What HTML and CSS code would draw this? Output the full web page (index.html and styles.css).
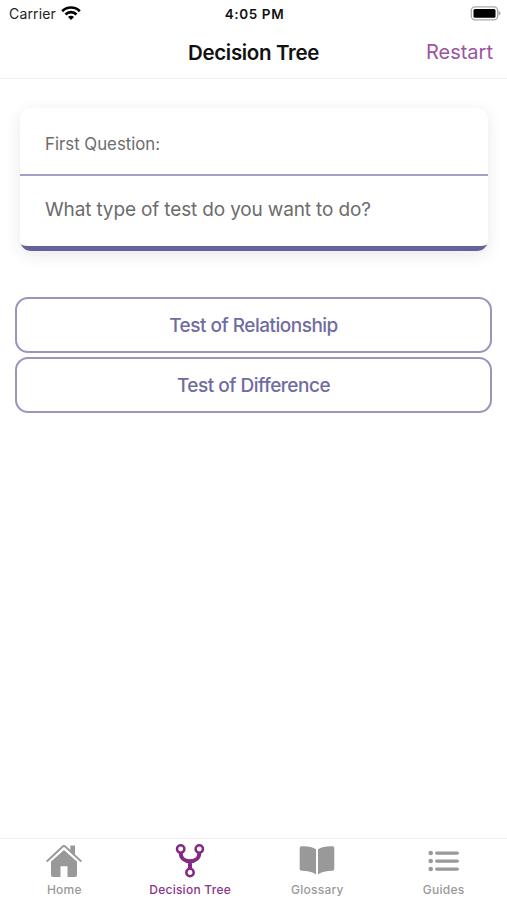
FILE: index.html
```
<!DOCTYPE html>
<html lang="en">
<head>
<meta charset="utf-8">
<title>Decision Tree</title>
<link rel="stylesheet" href="styles.css">
</head>
<body>
<div class="app">
  <div class="status">
    <div class="carrier"><span>Carrier</span>
      <svg class="wifi" width="20" height="14" viewBox="0 0 20 14" fill="none" stroke="#000" stroke-width="2.7"><path d="M1.2 5.2a12.3 12.3 0 0 1 17.6 0M4.5 8.5a7.7 7.7 0 0 1 11 0"/><path d="M10 14 7 11a4.2 4.2 0 0 1 6 0z" fill="#000" stroke="none"/></svg>
    </div>
    <span class="time">4:05 PM</span>
    <svg class="battery" width="31" height="15" viewBox="0 0 31 15"><rect x="1.3" y=".8" width="26.4" height="13" rx="3.8" fill="#fff" stroke="#aaa" stroke-width="1.3"/><rect x="3.500" y="3" width="22" height="8.7" rx="1.5"/><path d="M28.500 5v4.6q2-.6 2-2.3t-2-2.3z" fill="#aaa"/></svg>
  </div>
  <header class="navbar">
    <h1>Decision Tree</h1>
    <a class="restart">Restart</a>
  </header>
  <main>
    <section class="card">
      <div class="card-head"><span>First Question:</span></div>
      <div class="card-body"><span>What type of test do you want to do?</span></div>
    </section>
    <div class="choices">
      <button class="choice relationship">Test of Relationship</button>
      <button class="choice difference">Test of Difference</button>
    </div>
  </main>
  <nav class="tabs">
    <a class="tab home">
      <svg width="36" height="34" viewBox="0 0 36 34" fill="#999"><path d="M18 6 5 17.4V31q0 2 2 2h7.5V22.2h7V33H29q2 0 2-2V17.400z"/><path d="M24.300 1.500H29V11l-4.700-4.200z"/><path d="M1.300 17 16.500 2.700q1.500-1.300 3 0L34.700 17" fill="none" stroke="#999" stroke-width="1.900" stroke-linecap="round"/><path d="M3 18 18 4.500 33 18" fill="none" stroke="#fff" stroke-width="1.100"/></svg>
      <span>Home</span>
    </a>
    <a class="tab tree active">
      <svg width="30" height="34" viewBox="0 0 30 34" fill="none" stroke="#852987"><g stroke-width="2.500"><circle cx="5.700" cy="5" r="3.700"/><circle cx="24.300" cy="5" r="3.700"/><circle cx="15" cy="28.500" r="3.700"/></g><path d="M5.700 9c0 5 4 8.200 9.300 8.200s9.300-3.200 9.300-8.200M15 17v8" stroke-width="4"/></svg>
      <span>Decision Tree</span>
    </a>
    <a class="tab glossary">
      <svg width="36" height="34" viewBox="0 0 36 34" fill="#999"><path d="M17 5.200v25.300q-5-3.600-14.500-3.700Q.7 26.800.7 25V4.200Q.7 2.300 2.500 2.200 12 1.800 17 5.200zM19 5.200v25.300q5-3.600 14.500-3.700 1.800 0 1.800-1.800V4.200q0-1.900-1.800-2Q24 1.800 19 5.200z"/></svg>
      <span>Glossary</span>
    </a>
    <a class="tab guides">
      <svg width="32" height="34" viewBox="0 0 32 34" fill="#999"><circle cx="2.700" cy="9" r="2.300"/><circle cx="2.700" cy="17" r="2.300"/><circle cx="2.700" cy="25" r="2.300"/><rect x="7" y="7.400" width="24" height="3.400" rx="1.700"/><rect x="7" y="15.400" width="24" height="3.400" rx="1.700"/><rect x="7" y="23.400" width="24" height="3.400" rx="1.700"/></svg>
      <span>Guides</span>
    </a>
  </nav>
</div>
</body>
</html>
```

FILE: styles.css
```
* { box-sizing: border-box; }
body {
  margin: 0;
  background: #fff;
  font-family: Inter, "Liberation Sans", sans-serif;
  color: #000;
}
.app { height: 900px; display: flex; flex-direction: column; }
.status {
  height: 27px;
  display: grid;
  grid-template-columns: 1fr auto 1fr;
  align-items: center;
  padding: 0 6px 0 9px;
  line-height: 26px;
}
.carrier { display: flex; align-items: center; gap: 5px; font-size: 14px; letter-spacing: .15px; color: #222; }
.wifi { margin-top: -1px; }
.time { padding: 1px 1px 0 0; font-size: 13.500px; font-weight: 600; letter-spacing: .6px; color: #111; }
.battery { justify-self: end; margin-top: -1px; }
.navbar {
  height: 52px;
  display: grid;
  grid-template-columns: 1fr auto 1fr;
  align-items: center;
  padding: 0 14px 1px;
  border-bottom: 1px solid #efefef;
}
.navbar h1 {
  grid-column: 2;
  margin: 0;
  font-size: 20.500px;
  font-weight: 600;
  letter-spacing: -.33px;
  color: #111;
}
.restart { justify-self: end; font-size: 20px; color: #9c53a0; }
main { flex: 1; padding: 29px 15px 0; }
.card {
  height: 143px;
  margin: 0 4px 0 5px;
  border-radius: 11px;
  overflow: hidden;
  background: #fff;
  box-shadow: 0 4px 16px rgba(30, 40, 60, .1);
  color: #6c6c6c;
}
.card-head {
  height: 68px;
  padding: 6px 25px 0;
  display: flex;
  align-items: center;
  border-bottom: 2px solid #a49fc7;
  font-size: 16.800px;
}
.card-body {
  height: 75px;
  padding: 0 25px 3px;
  display: flex;
  align-items: center;
  border-bottom: 5px solid #65619a;
  border-radius: 0 0 8px 8px;
  font-size: 19px;
  letter-spacing: -.15px;
}
.choices { margin-top: 46px; display: grid; gap: 4px; }
.choice {
  height: 56px;
  padding: 1px 0 0;
  background: #fff;
  border: 2px solid #9995bd;
  border-radius: 13px;
  font: 500 19px Inter, "Liberation Sans", sans-serif;
  letter-spacing: -.5px;
  color: #706ca1;
}
.tabs {
  height: 62px;
  display: grid;
  grid-template-columns: repeat(4, 1fr);
  border-top: 1px solid #eee;
}
.tab {
  display: flex;
  flex-direction: column;
  align-items: center;
  padding-top: 5px;
  font-size: 12px;
  font-weight: 500;
  line-height: 16px;
  letter-spacing: .25px;
  color: #999;
}
.tab svg { margin-bottom: 4px; }
.home { padding-left: 2px; }
.glossary { padding-left: 1px; }
.active { color: #8a338c; }
```
